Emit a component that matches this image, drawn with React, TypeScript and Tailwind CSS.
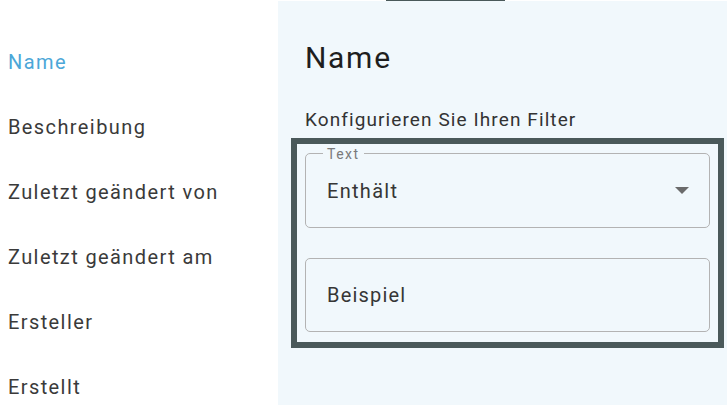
import React from "react";

const navItems = [
  "Name",
  "Beschreibung",
  "Zuletzt geändert von",
  "Zuletzt geändert am",
  "Ersteller",
  "Erstellt",
];

export default function App() {
  return (
    <div
      className="flex h-[405px] w-[727px] overflow-hidden bg-white"
      style={{ fontFamily: "Roboto, 'Noto Sans', sans-serif" }}
    >
      {/* Left navigation */}
      <div className="flex w-[278px] shrink-0 flex-col pt-[29px]">
        {navItems.map((item, i) => (
          <div
            key={item}
            className={`flex h-[65px] shrink-0 items-center pl-[8px] text-[20px] leading-[24px] tracking-[1.4px] ${
              i === 0 ? "text-[#4ca7d8]" : "text-[#3a3a3a]"
            }`}
          >
            {item}
          </div>
        ))}
      </div>

      {/* Right panel */}
      <div className="flex flex-1 flex-col">
        <div className="flex h-[1px] shrink-0 bg-white">
          <div className="ml-[108px] h-[1px] w-[119px] bg-[#4a595a]" />
        </div>
        <div className="flex flex-1 flex-col bg-[#f1f8fc] pl-[27px] pt-[41px]">
          <h1 className="text-[30px] font-normal leading-[32px] tracking-[1.7px] text-[#1e1e1e]">
            Name
          </h1>
          <p className="mt-[34px] text-[19px] leading-[24px] tracking-[1.1px] text-[#333333]">
            Konfigurieren Sie Ihren Filter
          </p>
          <div className="-ml-[14px] mt-[6px] flex w-[433px] flex-col border-[6px] border-[#4a595a] pb-[10px] pl-[8px] pr-[8px] pt-[9px]">
            {/* Select */}
            <div className="relative flex h-[75px] items-center justify-between rounded-[5px] border border-[#b3b3b3] pl-[21px]">
              <span className="absolute left-[17px] top-[-8px] bg-[#f1f8fc] px-[4px] text-[14px] leading-[16px] tracking-[1.5px] text-[#7a7a7a]">
                Text
              </span>
              <span className="text-[20px] leading-[24px] tracking-[1.3px] text-[#363636]">
                Enthält
              </span>
              <svg
                width="14"
                height="7"
                viewBox="0 0 14 7"
                className="mr-[20px]"
              >
                <path d="M0 0 L7 7 L14 0 Z" fill="#6b6b6b" />
              </svg>
            </div>
            {/* Text input */}
            <div className="mt-[30px] flex h-[74px] items-center rounded-[5px] border border-[#b3b3b3] pl-[21px]">
              <span className="text-[20px] leading-[24px] tracking-[1.2px] text-[#363636]">
                Beispiel
              </span>
            </div>
          </div>
        </div>
      </div>
    </div>
  );
}
